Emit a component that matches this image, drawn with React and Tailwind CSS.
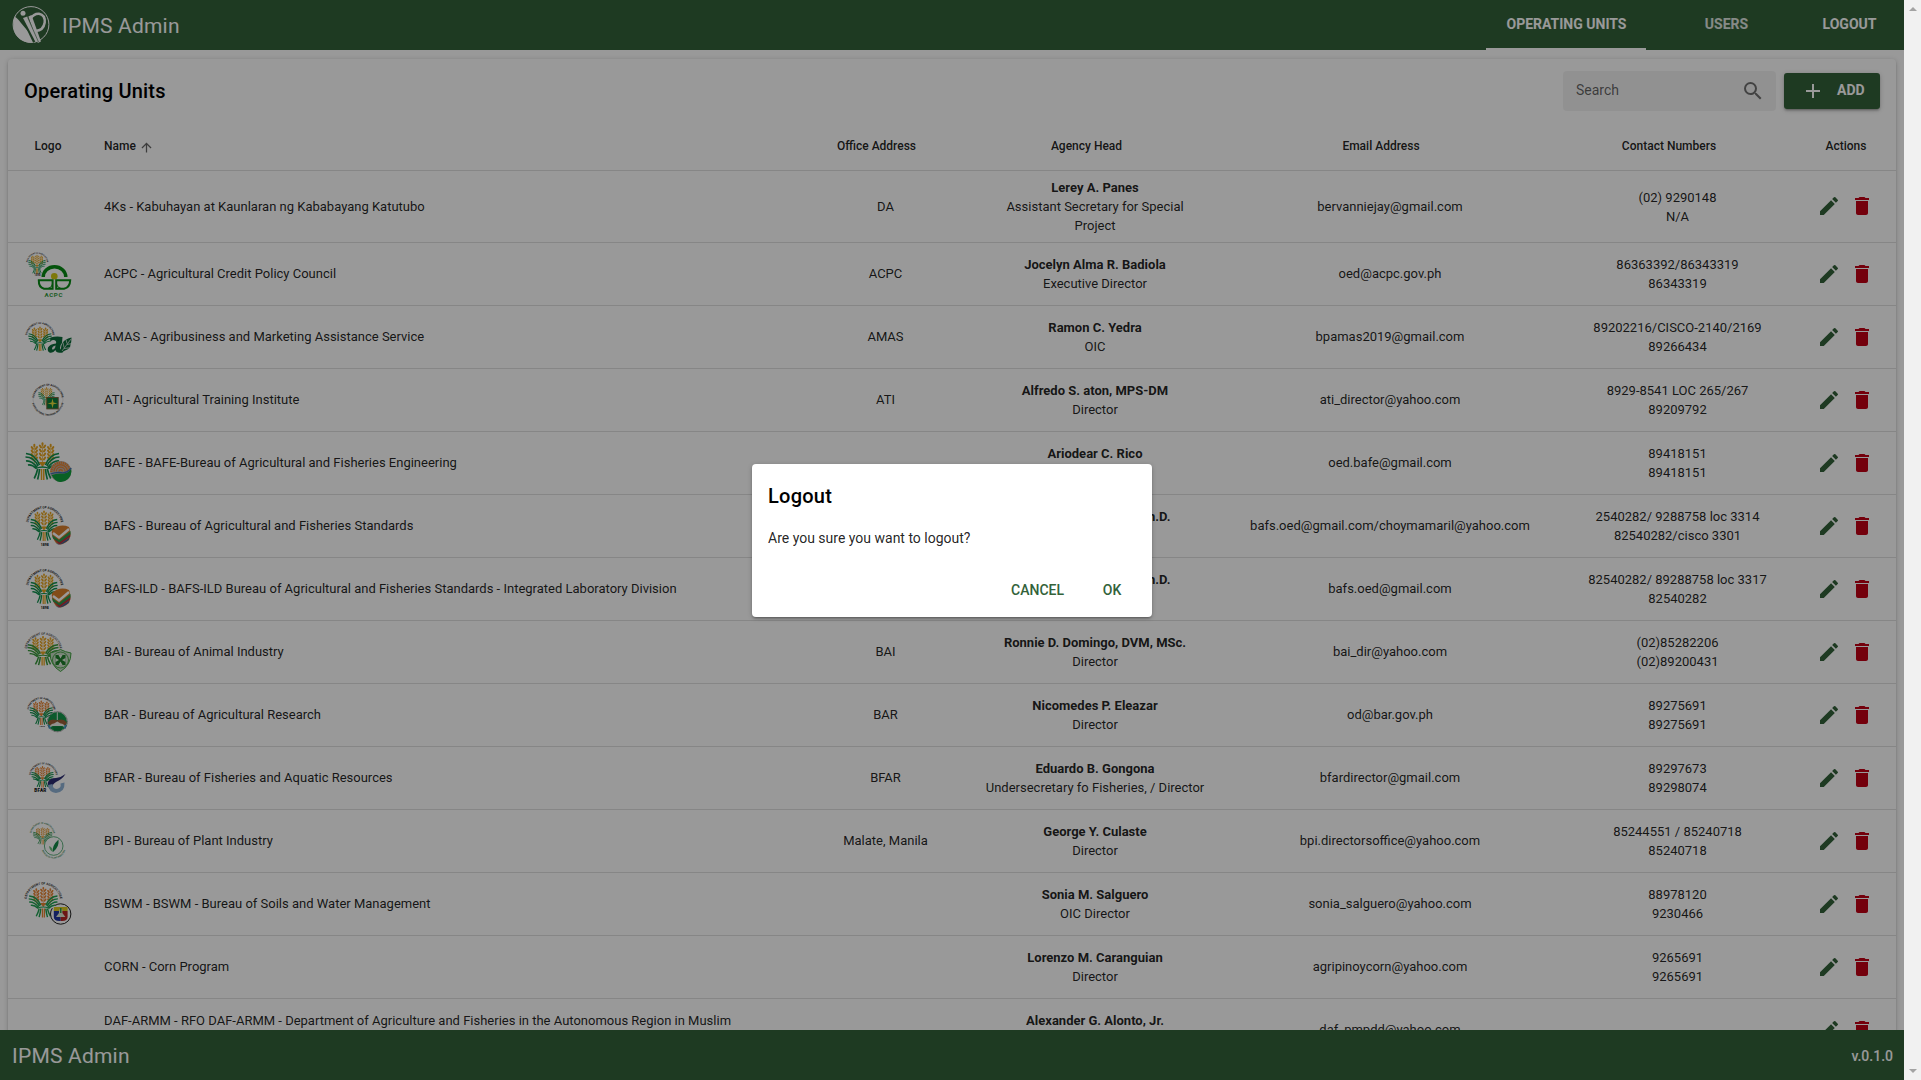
import React from "react";

const GOLD = "#e6a420";
const ORANGE = "#e88432";
const GREEN = "#12904e";

function Ear({ x, y, h, color }) {
  const rows = [0, 1, 2, 3];
  const step = h / 4;
  return (
    <g stroke={color} strokeWidth="2" strokeLinecap="round" fill="none">
      <path d={`M${x} ${y - 1.2}v1.6`} />
      {rows.map((r) => (
        <path
          key={r}
          d={`M${x - 2.8} ${y + r * step + 1}l1.3 1.9M${x + 2.8} ${y + r * step + 1}l-1.3 1.9`}
        />
      ))}
      <path d={`M${x} ${y + 2}V${y + h + 3}`} strokeWidth="0.7" />
    </g>
  );
}

function Sheaf({ x, y, w, h, ear = GOLD, leaf = GREEN }) {
  return (
    <svg x={x} y={y} width={w} height={h} viewBox="0 0 36 37" preserveAspectRatio="none" overflow="visible">
      <Ear x={9.6} y={3} h={14} color={ear} />
      <Ear x={18} y={1.5} h={16} color={ear} />
      <Ear x={26.4} y={3} h={14} color={ear} />
      <path d="M14 19h8l-4 5z" fill={ear} />
      <g fill="none" stroke={leaf} strokeWidth="1.7">
        <path d="M1 10.5C7 11 12 15 15 22M0.5 14C6 14 10.5 17 13.5 23M1 18C6 17.5 9 20 12.5 24.5M3 22C6 21.5 8.5 22.5 11.5 25.5" />
        <path d="M35 10.5C29 11 24 15 21 22M35.5 14C30 14 25.5 17 22.5 23M35 18C30 17.5 27 20 23.5 24.5M33 22C30 21.5 27.5 22.5 24.5 25.5" />
        <path d="M11 25.5Q18 22.5 25 25.5" strokeWidth="1.3" />
        <path d="M13 26Q12 31 9.5 35.5M15 26Q14.5 31 13 36.5M21 26Q21.5 31 23 36.5M23 26Q24 31 26.5 35.5" />
      </g>
      <path d="M17 26v11M19.3 26v11" stroke={ear} strokeWidth="1.5" />
    </svg>
  );
}

function ArcText({ id, cx, cy, r, size, text = "DEPARTMENT OF AGRICULTURE", color = "#333", bottom = false }) {
  const d = bottom
    ? `M${cx - r} ${cy}A${r} ${r} 0 0 0 ${cx + r} ${cy}`
    : `M${cx - r} ${cy}A${r} ${r} 0 0 1 ${cx + r} ${cy}`;
  return (
    <g>
      <path id={id} d={d} fill="none" />
      <text fontSize={size} fill={color} fontWeight="700" textAnchor="middle">
        <textPath href={`#${id}`} startOffset="50%">
          {text}
        </textPath>
      </text>
    </g>
  );
}

function LogoFrame({ children }) {
  return (
    <svg viewBox="0 0 48 48" className="block size-12" aria-hidden="true">
      {children}
    </svg>
  );
}

function Acpc() {
  return (
    <LogoFrame>
      <Sheaf x={4} y={5} w={18} h={19} />
      <ArcText id="acpc-a" cx={13.3} cy={13.5} r={9.8} size={1.9} />
      <text x="10.5" y="26" fontSize="2.6" fontWeight="700" fill="#333">1898</text>
      <path d="M19.2 27a11.2 10.2 0 0 1 22.600 0" fill="none" stroke="#078a14" strokeWidth="3.4" />
      <circle cx="30.3" cy="26.3" r="3.3" fill="#d2c812" />
      <path d="M14.8 30.3H28.6V38.8H20Q14.6 37.500 14.8 30.300Z" fill="none" stroke="#078a14" strokeWidth="2" />
      <path d="M46.2 30.3H32.2V38.8H40Q46 37.500 46.200 30.300Z" fill="none" stroke="#078a14" strokeWidth="2" />
      <path d="M24 38.500Q28 37.500 28.500 34M37 38.500Q33 37.500 32.500 34" fill="none" stroke="#078a14" strokeWidth="1" />
      <text x="20.5" y="47" fontSize="6.2" fontWeight="700" fill="#2f9a3a" textLength="18">ACPC</text>
    </LogoFrame>
  );
}

function Amas() {
  return (
    <LogoFrame>
      <Sheaf x={4} y={14} w={24} h={24} />
      <ArcText id="amas-a" cx={16} cy={24} r={13} size={2.5} color="#222" />
      <path d="M26.5 24.500Q32 23 38.500 24L38 30Q36 32 36 35Q36 37 39 36.500L38 39.500Q32 40.500 31.500 37Q29 40.500 25.500 39.500Q23 38 24 34.500Q26 31 32 30.500Q33 27 29 27Q27.500 27.200 26 29Z" fill="#0c6b3a" />
      <path d="M31.600 32.500Q28 33 28 36Q29 37.500 31 35Z" fill="#f2f2f2" />
      <path d="M37 38.500Q36 26.500 47.500 24.500Q47.500 29 46.500 31.500Q46.500 36 41 37.500Q39 38 38 40Z" fill="#0c6b3a" />
      <path d="M38 38L47 26M40 34.500l-1-5M43 30.500l-1-4M40 35.500l6.500-.8M43 31.500l4-.8" stroke="#f2f2f2" strokeWidth="0.7" />
    </LogoFrame>
  );
}

function Ati() {
  return (
    <LogoFrame>
      <circle cx="24" cy="23.7" r="15" fill="none" stroke="#555" strokeWidth="0.3" opacity="0.5" />
      <Sheaf x={14} y={11.5} w={17} h={18} />
      <ArcText id="ati-a" cx={24} cy={23.7} r={14} size={2.7} />
      <ArcText id="ati-b" cx={24} cy={23.7} r={16} size={2.5} text="AGRICULTURAL TRAINING INSTITUTE" bottom />
      <rect x="22.8" y="21.5" width="11.4" height="11.4" fill="#0c7a3a" stroke="#7d5a32" strokeWidth="0.9" />
      <path d="M28.5 22.5l1 4 4 .9-4 .9-1 4-1-4-4-.9 4-.9z" fill="#e6dc3a" />
    </LogoFrame>
  );
}

function Bafe() {
  return (
    <LogoFrame>
      <Sheaf x={1} y={4} w={35} h={37} />
      <circle cx="36.7" cy="32.5" r="10.6" fill="#b9b2ac" />
      <g fill="none" stroke={ORANGE}>
        <path d="M27.3 33a9.4 9.400 0 0 1 18.800 0" strokeWidth="2.2" strokeDasharray="1.5 0.6" />
        <path d="M30 32.500a6.700 6.700 0 0 1 13.400 0" strokeWidth="1.400" />
        <path d="M32.300 32.500a4.400 4.400 0 0 1 8.800 0" strokeWidth="1.300" />
        <path d="M35 32.500a1.700 1.700 0 0 1 3.400 0" strokeWidth="1.400" />
      </g>
      <path d="M27.5 36Q33 34 38 34.500T47.300 30Q48 36 44 40Q40 43.500 36 43Q31 42.500 27.500 36Z" fill="#0fa03c" />
      <path d="M26.5 35Q32 33 37.500 33.700T47.300 29" fill="none" stroke="#3d6fae" strokeWidth="1.3" />
    </LogoFrame>
  );
}

function Bafs({ id }) {
  return (
    <LogoFrame>
      <Sheaf x={6} y={9} w={28} h={30} />
      <ArcText id={id} cx={20.7} cy={22.8} r={16.5} size={3.2} color="#111" />
      <text x="16.8" y="44" fontSize="3.4" fontWeight="900" fill="#222">1898</text>
      <svg x="27" y="23" width="20" height="20" viewBox="0 0 20 20">
        <path d="M1 5Q9-2 18 2Q21 9 18 15Q10 22 5 18Q0 12 1 5Z" fill="#d97f2c" />
        <path d="M1 10l7 5L19.5 6v3.500L8.500 18L2 13.500Z" fill="#2c9a4c" />
        <path d="M2.500 13.500l6 4L19.300 9.500v2L8.500 19.500Z" fill="#b52b42" />
        <path d="M4.500 17.500l4 2L18.500 12.500l-1 2.500Q11 20 7 19.500Z" fill="#3a5a9c" />
        <path d="M2 8l6 4.500L18 4" fill="none" stroke="#fff" strokeWidth="2.400" />
      </svg>
    </LogoFrame>
  );
}

function Bai() {
  return (
    <LogoFrame>
      <Sheaf x={3} y={8.5} w={32} h={29} ear="#e8a626" leaf="#3a983c" />
      <ArcText id="bai-a" cx={19.3} cy={23.5} r={16.8} size={3.2} color="#555" />
      <path d="M26 25Q31 24 36.500 21.500Q41 24 47 25Q47 37 36.500 43.500Q26 37 26 25Z" fill="#c9dcc6" stroke="#3fa33f" strokeWidth="1" />
      <circle cx="36.5" cy="32" r="8" fill="none" stroke="#3fa33f" strokeWidth="0.9" />
      <rect x="31.5" y="27" width="10" height="10" fill="#1f7f2c" />
      <path d="M34.5 27h4l-2 3.500ZM34.500 37h4l-2-3.500ZM31.500 30l3.500 2-3.500 2zM41.500 30l-3.500 2 3.500 2z" fill="#e8f2e4" />
    </LogoFrame>
  );
}

function Bar() {
  return (
    <LogoFrame>
      <Sheaf x={5.3} y={10} w={24} h={24} ear={ORANGE} />
      <ArcText id="bar-a" cx={17.3} cy={20.5} r={12.6} size={2.45} color="#111" />
      <text x="15.3" y="35.5" fontSize="2.4" fontWeight="700" fill="#333">1898</text>
      <circle cx="33.3" cy="30.7" r="9.6" fill="#14964a" />
      <path d="M23.800 31.500Q27 27 33.300 29.500Q39 27 42.800 31.500L41 34.500H26Z" fill="#9c6038" />
      <path d="M25 36.500Q27 32.500 30 32.500L33.300 30.500L36.600 32.500Q40 32.500 41.600 36.500L38 35H29Z" fill="#f0f0ea" />
      <path d="M28 35.500h11l-2.500 4h-6Z" fill="#0f7f3e" />
      <path d="M33.300 21v8" stroke="#e8f0e8" strokeWidth="1" />
      <path d="M23.500 34h2l1.500 3-2 1ZM43 34h-2l-1.500 3 2 1Z" fill="#3aa0d8" />
      <circle cx="33.3" cy="30.7" r="10" fill="none" stroke="#666" strokeWidth="0.8" strokeDasharray="1 0.5" />
    </LogoFrame>
  );
}

function Bfar() {
  return (
    <LogoFrame>
      <Sheaf x={7} y={12.5} w={23} h={21} ear={ORANGE} />
      <ArcText id="bfar-a" cx={19.3} cy={23} r={12.8} size={2.45} color="#333" />
      <text x="10.3" y="37.600" fontSize="4.6" fontWeight="900" fill="#111" textLength="12">BFAR</text>
      <path d="M41.500 20Q37 23.500 32 24Q25 24 23.700 29Q23.700 34 27.500 36Q27.500 30.500 32 28Q38 25.500 41.500 20Z" fill="#2b2c72" />
      <path d="M24 31Q25 38.800 32 38.900Q41 38.500 40.500 28.500L36.500 29.500Q37.500 34 33 35Q28.500 35 28.500 30Z" fill="#8fb2d6" />
    </LogoFrame>
  );
}

function Bpi() {
  return (
    <LogoFrame>
      <Sheaf x={8.7} y={10.5} w={20} h={17} ear="#e8a040" leaf="#2d9450" />
      <ArcText id="bpi-a" cx={18.3} cy={18} r={11.2} size={2.15} color="#3f7f56" />
      <circle cx="29.7" cy="29" r="9.3" fill="#fff" stroke="#4fa870" strokeWidth="0.9" />
      <ArcText id="bpi-b" cx={29.7} cy={29} r={12.5} size={2.2} color="#3f8f5a" text="BUREAU OF PLANT INDUSTRY" bottom />
      <path d="M29 35Q27.5 29 34.5 22.5Q35.5 30 29 35Z" fill="#138a48" />
      <path d="M25 29Q28.5 30 29 35Q25.500 33.500 25 29Z" fill="#6cbf7c" />
    </LogoFrame>
  );
}

function Bswm() {
  return (
    <LogoFrame>
      <Sheaf x={4.3} y={7.5} w={30} h={30} ear={ORANGE} leaf="#1fa050" />
      <ArcText id="bswm-a" cx={19.3} cy={21.5} r={17} size={3.25} color="#333" />
      <circle cx="36.7" cy="34" r="10.2" fill="#fff" stroke="#222" strokeWidth="1" strokeDasharray="38 4" />
      <path d="M29.8 27h13.8v4H29.800Z" fill="#e0cc20" />
      <path d="M29.8 31h6.9v10Q30 41.500 29.800 37Z" fill="#2438a0" />
      <path d="M43.6 31h-6.900v10Q43.400 41.500 43.600 37Z" fill="#b52424" />
      <path d="M35 29.500h3.400v3.500l3 4h-9.400l3-4Z" fill="#dfe6d0" />
      <path d="M36 28h1.500v5H36Z" fill="#2f9a4a" />
    </LogoFrame>
  );
}

const units = [
  { logo: null, name: "4Ks - Kabuhayan at Kaunlaran ng Kababayang Katutubo", office: "DA", head: "Lerey A. Panes", roles: ["Assistant Secretary for Special", "Project"], email: "bervanniejay@gmail.com", phones: ["(02) 9290148", "N/A"] },
  { logo: <Acpc />, name: "ACPC - Agricultural Credit Policy Council", office: "ACPC", head: "Jocelyn Alma R. Badiola", roles: ["Executive Director"], email: "oed@acpc.gov.ph", phones: ["86363392/86343319", "86343319"] },
  { logo: <Amas />, name: "AMAS - Agribusiness and Marketing Assistance Service", office: "AMAS", head: "Ramon C. Yedra", roles: ["OIC"], email: "bpamas2019@gmail.com", phones: ["89202216/CISCO-2140/2169", "89266434"] },
  { logo: <Ati />, name: "ATI - Agricultural Training Institute", office: "ATI", head: "Alfredo S. aton, MPS-DM", roles: ["Director"], email: "ati_director@yahoo.com", phones: ["8929-8541 LOC 265/267", "89209792"] },
  { logo: <Bafe />, name: "BAFE - BAFE-Bureau of Agricultural and Fisheries Engineering", office: "", head: "Ariodear C. Rico", roles: ["\u00a0"], email: "oed.bafe@gmail.com", phones: ["89418151", "89418151"] },
  { logo: <Bafs id="bafs-a" />, name: "BAFS - Bureau of Agricultural and Fisheries Standards", office: "", head: "Vivencio R. Mamaril,Ph.D.", roles: ["\u00a0"], email: "bafs.oed@gmail.com/choymamaril@yahoo.com", phones: ["2540282/ 9288758 loc 3314", "82540282/cisco 3301"] },
  { logo: <Bafs id="bafs-b" />, name: "BAFS-ILD - BAFS-ILD Bureau of Agricultural and Fisheries Standards - Integrated Laboratory Division", office: "", head: "Vivencio R. Mamaril,Ph.D.", roles: ["\u00a0"], email: "bafs.oed@gmail.com", phones: ["82540282/ 89288758 loc 3317", "82540282"] },
  { logo: <Bai />, name: "BAI - Bureau of Animal Industry", office: "BAI", head: "Ronnie D. Domingo, DVM, MSc.", roles: ["Director"], email: "bai_dir@yahoo.com", phones: ["(02)85282206", "(02)89200431"] },
  { logo: <Bar />, name: "BAR - Bureau of Agricultural Research", office: "BAR", head: "Nicomedes P. Eleazar", roles: ["Director"], email: "od@bar.gov.ph", phones: ["89275691", "89275691"] },
  { logo: <Bfar />, name: "BFAR - Bureau of Fisheries and Aquatic Resources", office: "BFAR", head: "Eduardo B. Gongona", roles: ["Undersecretary fo Fisheries, / Director"], email: "bfardirector@gmail.com", phones: ["89297673", "89298074"] },
  { logo: <Bpi />, name: "BPI - Bureau of Plant Industry", office: "Malate, Manila", head: "George Y. Culaste", roles: ["Director"], email: "bpi.directorsoffice@yahoo.com", phones: ["85244551 / 85240718", "85240718"] },
  { logo: <Bswm />, name: "BSWM - BSWM - Bureau of Soils and Water Management", office: "", head: "Sonia M. Salguero", roles: ["OIC Director"], email: "sonia_salguero@yahoo.com", phones: ["88978120", "9230466"] },
  { logo: null, name: "CORN - Corn Program", office: "", head: "Lorenzo M. Caranguian", roles: ["Director"], email: "agripinoycorn@yahoo.com", phones: ["9265691", "9265691"] },
  { logo: null, name: "DAF-ARMM - RFO DAF-ARMM - Department of Agriculture and Fisheries in the Autonomous Region in Muslim Mindanao", office: "", head: "Alexander G. Alonto, Jr.", roles: ["Director"], email: "daf_pmpdd@yahoo.com", phones: [] },
];

function Icon({ d, className }) {
  return (
    <svg viewBox="0 0 24 24" fill="currentColor" className={className} aria-hidden="true">
      <path d={d} />
    </svg>
  );
}

const EDIT = "M3 17.25V21h3.75L17.81 9.94l-3.75-3.75L3 17.25zM20.71 7.04a.996.996 0 0 0 0-1.41l-2.34-2.34a.996.996 0 0 0-1.41 0l-1.83 1.83 3.75 3.75 1.83-1.83z";
const DELETE = "M6 19c0 1.1.9 2 2 2h8c1.1 0 2-.9 2-2V7H6v12zM19 4h-3.5l-1-1h-5l-1 1H5v2h14V4z";
const SEARCH = "M15.5 14h-.79l-.28-.27A6.471 6.471 0 0 0 16 9.5 6.5 6.5 0 1 0 9.5 16c1.61 0 3.09-.59 4.23-1.57l.27.28v.79l5 4.99L20.49 19l-4.99-5zm-6 0C7.01 14 5 11.99 5 9.5S7.01 5 9.5 5 14 7.01 14 9.5 11.99 14 9.5 14z";
const ADD = "M19 13h-6v6h-2v-6H5v-2h6V5h2v6h6v2z";
const ARROW_UP = "M4 12l1.41 1.41L11 7.83V20h2V7.83l5.58 5.59L20 12l-8-8-8 8z";

function BrandMark() {
  return (
    <svg viewBox="0 0 38 38" className="size-[38px]" aria-hidden="true">
      <circle cx="19" cy="18.5" r="17.9" fill="none" stroke="#fff" strokeWidth="1" />
      <path d="M2.500 10.500C5 12 7 14 9 17L25 36C16.500 38.500 7.500 35 3.500 28C0.700 23 0.700 16 2.500 10.500Z" fill="#fff" />
      <circle cx="11" cy="7.200" r="2.500" fill="#fff" />
      <path d="M11.400 13L22.500 36" stroke="#33623a" strokeWidth="3" />
      <path d="M11 12l4.300-1.500L26 34.500l-2.500 1.500Z" fill="#fff" />
      <path d="M16.300 10.500l3.200-1.500L29 35.500l-3.200 1.500Z" fill="#fff" />
      <path d="M15.700 11.500L26.500 36" stroke="#33623a" strokeWidth="0.600" />
      <path d="M18.500 13Q21.500 7.600 27 7.800Q33.300 9 32.700 16.500Q31.500 24.500 23.500 25" fill="none" stroke="#fff" strokeWidth="2.500" />
    </svg>
  );
}

function HeaderCell({ children }) {
  return (
    <div className="flex items-center justify-center pl-px">
      <span>{children}</span>
      <span className="ml-1 w-[14px]" />
    </div>
  );
}

function Row({ unit }) {
  return (
    <div className="grid grid-cols-[80px_711px_172px_248px_341px_235px_101px] items-center border-b border-black/12 py-[7px] text-center">
      <div className="flex h-12 items-center justify-center">{unit.logo}</div>
      <div className="px-4 pb-px text-left">{unit.name}</div>
      <div className="pb-px pl-px">{unit.office}</div>
      <div className="whitespace-nowrap">
        <div className="font-bold">{unit.head}</div>
        {unit.roles.map((r) => (
          <div key={r}>{r}</div>
        ))}
      </div>
      <div className="pb-px pl-px">{unit.email}</div>
      <div>
        {unit.phones.map((p, i) => (
          <div key={i}>{p}</div>
        ))}
      </div>
      <div className="flex items-center justify-center gap-[9px] pb-px">
        <Icon d={EDIT} className="size-6 text-[#33623a]" />
        <Icon d={DELETE} className="size-6 text-[#c10015]" />
      </div>
    </div>
  );
}

export default function App() {
  return (
    <div className="flex h-[1080px] w-[1921px] overflow-hidden font-['Roboto',sans-serif]">
      <div className="relative flex h-full w-[1904px] flex-col bg-white text-black/87">
        <header className="flex h-[50px] shrink-0 items-stretch bg-[#33623a] px-3 text-white">
          <div className="flex flex-1 items-center">
            <BrandMark />
            <span className="pt-[3px] pl-3 text-[21px] tracking-[0.01em]">IPMS Admin</span>
          </div>
          <div className="flex w-40 items-center justify-center border-b-2 border-white pl-px text-sm font-bold">OPERATING UNITS</div>
          <div className="flex w-40 items-center justify-center pb-0.5 pl-px text-sm font-bold text-white/85">USERS</div>
          <div className="flex w-[86px] items-center justify-center pb-0.5 pl-px text-sm font-bold">LOGOUT</div>
        </header>

        <main className="min-h-0 flex-1 overflow-hidden px-2 pt-[9px]">
          <section className="h-[1200px] rounded bg-white shadow-[0_1px_5px_rgba(0,0,0,0.2),0_2px_2px_rgba(0,0,0,0.14),0_3px_1px_-2px_rgba(0,0,0,0.12)]">
            <div className="flex h-16 items-center px-4">
              <h1 className="flex-1 text-xl font-medium tracking-[0.01em] text-black">Operating Units</h1>
              <div className="flex h-10 w-[213px] items-center justify-between rounded bg-black/5 pr-[11px] pl-[13px] text-sm text-black/60">
                <span className="pb-0.5">Search</span>
                <Icon d={SEARCH} className="size-6 text-black/54" />
              </div>
              <button className="ml-2 flex h-9 w-24 items-center rounded-[3px] bg-[#33623a] pl-[17px] text-sm font-bold text-white shadow-[0_1px_5px_rgba(0,0,0,0.2),0_2px_2px_rgba(0,0,0,0.14),0_3px_1px_-2px_rgba(0,0,0,0.12)]">
                <Icon d={ADD} className="mr-3 size-6 shrink-0" />
                <span className="pb-0.5">ADD</span>
              </button>
            </div>
            <div className="grid h-12 grid-cols-[80px_711px_172px_248px_341px_235px_101px] items-center border-b border-black/12 pb-0.5 text-xs font-medium">
              <div className="text-center">Logo</div>
              <div className="flex items-center px-4">
                <span>Name</span>
                <Icon d={ARROW_UP} className="mt-[3px] ml-[3px] size-[15px] text-black/60" />
              </div>
              <HeaderCell>Office Address</HeaderCell>
              <HeaderCell>Agency Head</HeaderCell>
              <HeaderCell>Email Address</HeaderCell>
              <HeaderCell>Contact Numbers</HeaderCell>
              <div className="pl-px text-center">Actions</div>
            </div>
            <div className="text-[13px] leading-[19px]">
              {units.map((u) => (
                <Row key={u.name} unit={u} />
              ))}
            </div>
          </section>
        </main>

        <footer className="flex h-[50px] shrink-0 items-center justify-between bg-[#33623a] pr-[11px] pl-3 text-white">
          <span className="pt-[3px] text-[21px] tracking-[0.01em]">IPMS Admin</span>
          <span className="pt-px text-sm font-medium">v.0.1.0</span>
        </footer>

        <div className="absolute inset-0 flex items-center justify-center bg-black/40">
          <div className="flex h-[153px] w-[400px] flex-col rounded bg-white shadow-[0_1px_5px_rgba(0,0,0,0.2),0_2px_2px_rgba(0,0,0,0.14),0_3px_1px_-2px_rgba(0,0,0,0.12)]">
            <div className="p-4 text-xl leading-8 font-medium tracking-[0.0125em] text-black">Logout</div>
            <div className="px-4 text-sm leading-[21px]">Are you sure you want to logout?</div>
            <div className="mt-auto flex justify-end p-2 text-sm font-medium text-[#33623a]">
              <button className="h-9 px-4 pb-0.5">CANCEL</button>
              <button className="h-9 w-16 pb-0.5">OK</button>
            </div>
          </div>
        </div>
      </div>
      <div className="flex w-[17px] flex-col items-center justify-between bg-[#f1f1f1] py-[7px]">
        <svg viewBox="0 0 8 4" className="h-1 w-2"><path d="M4 0l4 4H0z" fill="#a3a3a3" /></svg>
        <svg viewBox="0 0 8 4" className="h-1 w-2"><path d="M4 4L0 0h8z" fill="#a3a3a3" /></svg>
      </div>
    </div>
  );
}
